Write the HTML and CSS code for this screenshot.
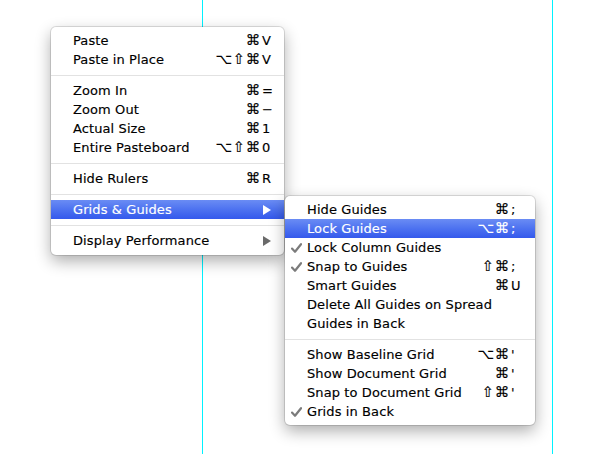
FILE: index.html
```html
<!DOCTYPE html>
<html>
<head>
<meta charset="utf-8">
<link rel="stylesheet" href="styles.css">
</head>
<body>
<div class="canvas">
  <div class="guide guide-left"></div>
  <div class="guide guide-right"></div>

  <div class="menu menu-main">
    <div class="item"><span class="label">Paste</span><span class="keys"><span class="mods">⌘</span><span class="key">V</span></span></div>
    <div class="item"><span class="label">Paste in Place</span><span class="keys"><span class="mods">⌥⇧⌘</span><span class="key">V</span></span></div>
    <div class="sep"></div>
    <div class="item"><span class="label">Zoom In</span><span class="keys"><span class="mods">⌘</span><span class="key">=</span></span></div>
    <div class="item"><span class="label">Zoom Out</span><span class="keys"><span class="mods">⌘</span><span class="key">−</span></span></div>
    <div class="item"><span class="label">Actual Size</span><span class="keys"><span class="mods">⌘</span><span class="key">1</span></span></div>
    <div class="item"><span class="label">Entire Pasteboard</span><span class="keys"><span class="mods">⌥⇧⌘</span><span class="key">0</span></span></div>
    <div class="sep"></div>
    <div class="item"><span class="label">Hide Rulers</span><span class="keys"><span class="mods">⌘</span><span class="key">R</span></span></div>
    <div class="sep"></div>
    <div class="item active"><span class="label">Grids &amp; Guides</span><span class="arrow"></span></div>
    <div class="sep"></div>
    <div class="item"><span class="label">Display Performance</span><span class="arrow"></span></div>
  </div>

  <div class="menu menu-sub">
    <div class="item"><span class="label">Hide Guides</span><span class="keys"><span class="mods">⌘</span><span class="key">;</span></span></div>
    <div class="item active"><span class="label">Lock Guides</span><span class="keys"><span class="mods">⌥⌘</span><span class="key">;</span></span></div>
    <div class="item checked"><svg class="check" width="11" height="10" viewBox="0 0 11 10"><path d="M1 5.6 L4 8.8 L10 1.2" fill="none" stroke="#7b7b7b" stroke-width="2.2" stroke-linecap="round" stroke-linejoin="round"/></svg><span class="label">Lock Column Guides</span></div>
    <div class="item checked"><svg class="check" width="11" height="10" viewBox="0 0 11 10"><path d="M1 5.6 L4 8.8 L10 1.2" fill="none" stroke="#7b7b7b" stroke-width="2.2" stroke-linecap="round" stroke-linejoin="round"/></svg><span class="label">Snap to Guides</span><span class="keys"><span class="mods">⇧⌘</span><span class="key">;</span></span></div>
    <div class="item"><span class="label">Smart Guides</span><span class="keys"><span class="mods">⌘</span><span class="key">U</span></span></div>
    <div class="item"><span class="label">Delete All Guides on Spread</span></div>
    <div class="item"><span class="label">Guides in Back</span></div>
    <div class="sep"></div>
    <div class="item"><span class="label">Show Baseline Grid</span><span class="keys"><span class="mods">⌥⌘</span><span class="key">'</span></span></div>
    <div class="item"><span class="label">Show Document Grid</span><span class="keys"><span class="mods">⌘</span><span class="key">'</span></span></div>
    <div class="item"><span class="label">Snap to Document Grid</span><span class="keys"><span class="mods">⇧⌘</span><span class="key">'</span></span></div>
    <div class="item checked"><svg class="check" width="11" height="10" viewBox="0 0 11 10"><path d="M1 5.6 L4 8.8 L10 1.2" fill="none" stroke="#7b7b7b" stroke-width="2.2" stroke-linecap="round" stroke-linejoin="round"/></svg><span class="label">Grids in Back</span></div>
  </div>
</div>
</body>
</html>
```

FILE: styles.css
```css
html, body {
  margin: 0;
  padding: 0;
  background: #ffffff;
}

.canvas {
  position: relative;
  width: 600px;
  height: 454px;
  overflow: hidden;
  font-family: "DejaVu Sans", "Liberation Sans", sans-serif;
  font-size: 13px;
  letter-spacing: 0.1px;
  color: #000;
  -webkit-text-stroke: 0.15px currentColor;
}

.guide {
  position: absolute;
  top: 0;
  width: 1px;
  height: 454px;
  background: #00f2ff;
}
.guide-left { left: 202px; }
.guide-right { left: 552px; }

.menu {
  position: absolute;
  background: #ffffff;
  border-radius: 5px;
  box-shadow: 0 0 0 1px rgba(0, 0, 0, 0.12), 0 6px 16px rgba(0, 0, 0, 0.33);
  display: flex;
  flex-direction: column;
}

.menu-main {
  left: 51px;
  top: 27px;
  width: 233px;
  padding: 4px 0 5px;
}

.menu-sub {
  left: 285px;
  top: 196px;
  width: 250px;
  padding: 4px 0;
}

.item {
  position: relative;
  display: flex;
  align-items: center;
  height: 19px;
  line-height: 19px;
  padding: 0 12px 0 22px;
  white-space: nowrap;
}
.menu-sub .item { padding-right: 14px; }

.item .label { flex: 1; }

.keys {
  display: flex;
  align-items: baseline;
}
.mods {
  font-size: 14.5px;
  letter-spacing: 0.8px;
  margin-right: 1px;
}
.key {
  width: 10px;
  text-align: left;
}

.item.active {
  background: linear-gradient(to bottom, #6a8cf4 0%, #4d72f0 50%, #3459ec 100%);
  color: #ffffff;
}

.arrow {
  width: 0;
  height: 0;
  border-left: 8px solid #6a6a6a;
  border-top: 5px solid transparent;
  border-bottom: 5px solid transparent;
  margin-right: 1px;
}
.item.active .arrow { border-left-color: #ffffff; }

.check {
  position: absolute;
  left: 6px;
  top: 5px;
}

.sep {
  height: 12px;
  display: flex;
  align-items: center;
}
.sep::before {
  content: "";
  flex: 1;
  height: 1px;
  background: #e2e2e2;
}
```
